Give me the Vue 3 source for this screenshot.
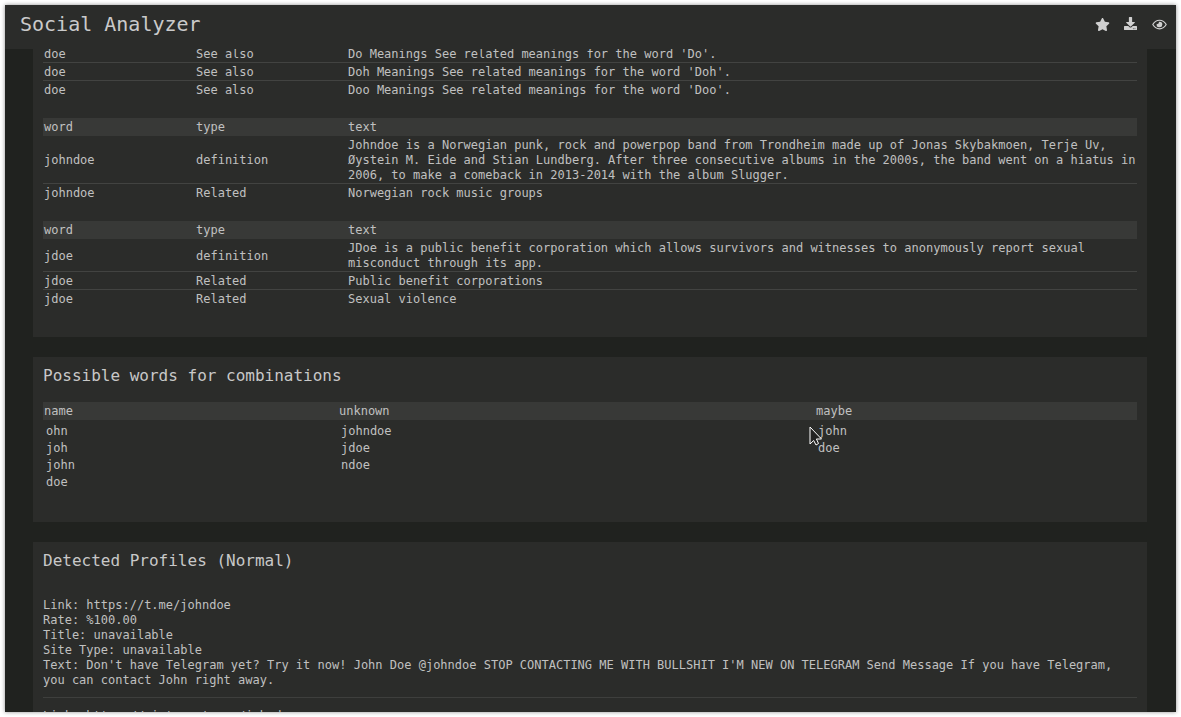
<script setup>
const t1 = [
  ['doe', 'See also', "Do Meanings See related meanings for the word 'Do'."],
  ['doe', 'See also', "Doh Meanings See related meanings for the word 'Doh'."],
  ['doe', 'See also', "Doo Meanings See related meanings for the word 'Doo'."],
]
const t2 = [
  ['johndoe', 'definition', 'Johndoe is a Norwegian punk, rock and powerpop band from Trondheim made up of Jonas Skybakmoen, Terje Uv, Øystein M. Eide and Stian Lundberg. After three consecutive albums in the 2000s, the band went on a hiatus in 2006, to make a comeback in 2013-2014 with the album Slugger.'],
  ['johndoe', 'Related', 'Norwegian rock music groups'],
]
const t3 = [
  ['jdoe', 'definition', 'JDoe is a public benefit corporation which allows survivors and witnesses to anonymously report sexual misconduct through its app.'],
  ['jdoe', 'Related', 'Public benefit corporations'],
  ['jdoe', 'Related', 'Sexual violence'],
]
const combos = [
  ['ohn', 'johndoe', 'john'],
  ['joh', 'jdoe', 'doe'],
  ['john', 'ndoe', ''],
  ['doe', '', ''],
]
</script>

<template>
  <div class="page">
    <div class="window">
      <header class="topbar">
        <span class="brand">Social Analyzer</span>
        <div class="icons">
          <svg class="ic star" viewBox="0 0 576 512"><path d="M259.3 17.8L194 150.2 47.9 171.5c-26.2 3.8-36.7 36.1-17.7 54.6l105.7 103-25 145.5c-4.5 26.3 23.2 46 46.4 33.7L288 439.6l130.7 68.7c23.2 12.2 50.9-7.4 46.4-33.7l-25-145.5 105.7-103c19-18.5 8.5-50.8-17.7-54.6L382 150.2 316.7 17.8c-11.7-23.6-45.6-23.9-57.4 0z"/></svg>
          <svg class="ic dl" viewBox="0 0 512 512"><path d="M216 0h80c13.3 0 24 10.7 24 24v168h87.7c17.8 0 26.7 21.5 14.1 34.1L269.7 378.3c-7.5 7.5-19.8 7.5-27.3 0L90.1 226.1c-12.6-12.6-3.7-34.1 14.1-34.1H192V24c0-13.3 10.7-24 24-24zm296 376v112c0 13.3-10.7 24-24 24H24c-13.3 0-24-10.7-24-24V376c0-13.3 10.7-24 24-24h146.7l49 49c20.1 20.1 52.5 20.1 72.6 0l49-49H488c13.3 0 24 10.7 24 24zm-124 88c0-11-9-20-20-20s-20 9-20 20 9 20 20 20 20-9 20-20zm64 0c0-11-9-20-20-20s-20 9-20 20 9 20 20 20 20-9 20-20z"/></svg>
          <svg class="ic eye" viewBox="0 0 576 512"><path d="M288 144a110.94 110.94 0 0 0-31.24 5 55.4 55.4 0 0 1 7.24 27 56 56 0 0 1-56 56 55.4 55.4 0 0 1-27-7.24A111.71 111.71 0 1 0 288 144zm284.52 97.4C518.29 135.59 410.93 64 288 64S57.68 135.64 3.48 241.41a32.35 32.35 0 0 0 0 29.19C57.71 376.41 165.07 448 288 448s230.32-71.64 284.52-177.41a32.35 32.35 0 0 0 0-29.19zM288 400c-98.65 0-189.09-55-237.93-144C98.91 167 189.34 112 288 112s189.09 55 237.93 144C477.1 345 386.66 400 288 400z"/></svg>
        </div>
      </header>
      <main class="scroll">
        <section class="card first">
          <table class="tbl">
            <tbody>
              <tr v-for="(r, i) in t1" :key="i"><td>{{ r[0] }}</td><td>{{ r[1] }}</td><td>{{ r[2] }}</td></tr>
            </tbody>
          </table>
          <table class="tbl">
            <thead><tr><th>word</th><th>type</th><th>text</th></tr></thead>
            <tbody>
              <tr v-for="(r, i) in t2" :key="i"><td>{{ r[0] }}</td><td>{{ r[1] }}</td><td>{{ r[2] }}</td></tr>
            </tbody>
          </table>
          <table class="tbl">
            <thead><tr><th>word</th><th>type</th><th>text</th></tr></thead>
            <tbody>
              <tr v-for="(r, i) in t3" :key="i"><td>{{ r[0] }}</td><td>{{ r[1] }}</td><td>{{ r[2] }}</td></tr>
            </tbody>
          </table>
        </section>
        <section class="card">
          <h2>Possible words for combinations</h2>
          <div class="combo-head"><span>name</span><span>unknown</span><span>maybe</span></div>
          <div class="combo-row" v-for="(r, i) in combos" :key="i"><span>{{ r[0] }}</span><span>{{ r[1] }}</span><span>{{ r[2] }}</span></div>
        </section>
        <section class="card last">
          <h2>Detected Profiles (Normal)</h2>
          <div class="profile">
            <div>Link: https://t.me/johndoe</div>
            <div>Rate: %100.00</div>
            <div>Title: unavailable</div>
            <div>Site Type: unavailable</div>
            <div>Text: Don't have Telegram yet? Try it now! John Doe @johndoe STOP CONTACTING ME WITH BULLSHIT I'M NEW ON TELEGRAM Send Message If you have Telegram, you can contact John right away.</div>
          </div>
          <hr />
          <div class="profile">
            <div>Link: https://pinterest.com/johndoe</div>
          </div>
        </section>
      </main>
      <svg class="cursor" width="14" height="20" viewBox="0 0 14 20"><path d="M1 1V18L4.7 14.5L7 19L9.5 17.5L7.4 13H12.5Z" fill="#222" stroke="#fff" stroke-width="1"/></svg>
    </div>
  </div>
</template>

<style>
html, body { margin: 0; background: #fff; }
</style>

<style scoped>
.page {
  width: 1181px;
  height: 717px;
  padding: 5px;
  box-sizing: border-box;
  background: #fff;
  overflow: hidden;
  font-family: "DejaVu Sans Mono", monospace;
  font-size: 12px;
  line-height: 15px;
  color: #c0c0c0;
}
.window {
  position: relative;
  width: 1171px;
  height: 707px;
  background: #20221f;
  box-shadow: 0 0 4px rgba(0, 0, 0, .45);
  overflow: hidden;
  display: flex;
  flex-direction: column;
}
.topbar {
  flex: none;
  height: 44px;
  box-sizing: border-box;
  background: #2b2c2a;
  display: flex;
  align-items: center;
  justify-content: space-between;
  padding: 0 9px 6px 15px;
  z-index: 1;
}
.brand { font-size: 20px; line-height: 24px; color: #cacaca; }
.icons { display: flex; align-items: center; gap: 15px; margin-top: 1px; }
.ic { fill: #d0d0d0; display: block; }
.star { width: 15px; height: 13px; margin-right: -1px; }
.dl { width: 13px; height: 13px; margin-bottom: 3px; }
.eye { width: 15px; height: 13px; }
.scroll { flex: 1; min-height: 0; overflow: hidden; padding: 0 29px 0 28px; }
.card {
  background: #2b2c2a;
  padding: 10px;
  margin-bottom: 20px;
}
.card.first { padding-top: 0; padding-bottom: 30px; margin-top: -4px; }
.card h2 {
  margin: -1px 0 16px;
  font-size: 16px;
  line-height: 20px;
  font-weight: 400;
  color: #c8c8c8;
}
.card.last h2 { margin-bottom: 27px; }
.tbl {
  width: 1094px;
  table-layout: fixed;
  border-collapse: collapse;
  margin-bottom: 20px;
}
.tbl:last-child { margin-bottom: 0; }
.tbl td, .tbl th {
  text-align: left;
  vertical-align: middle;
  font-weight: 400;
}
.tbl td {
  padding: 2px 1px 0;
  border-bottom: 1px solid #424341;
}
.tbl th:nth-child(1), .tbl th:nth-child(2), .tbl td:nth-child(1), .tbl td:nth-child(2) { width: 150px; }
.tbl th { background: #383937; padding: 2px 1px 1px; }
.tbl tbody tr:last-child td { border-bottom: 0; }
.combo-head, .combo-row { display: grid; }
.combo-head {
  grid-template-columns: 295px 477px 1fr;
  background: #383937;
  padding: 2px 0 1px 1px;
  margin-bottom: 3px;
}
.combo-row {
  grid-template-columns: 296px 477px 1fr;
  height: 17px;
  line-height: 17px;
  padding-left: 3px;
}
.combo-row span:nth-child(2) { margin-left: -1px; }
.combo-row span:nth-child(3) { margin-left: -1px; }
.card:nth-child(2) { padding-bottom: 31px; }
.card.last { padding-bottom: 10px; margin-bottom: 0; }
hr { border: 0; border-top: 1px solid #3e3f3d; margin: 9px 0 11px; }
.cursor { position: absolute; left: 804px; top: 421px; z-index: 2; }
</style>
